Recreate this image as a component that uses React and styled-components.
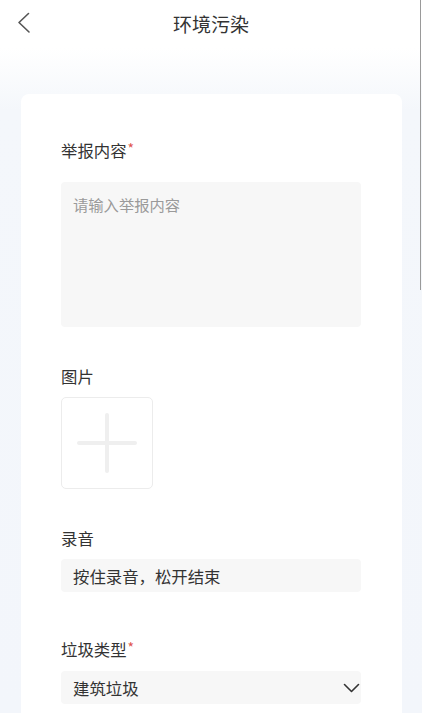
import React from "react";
import styled, { createGlobalStyle } from "styled-components";

const Global = createGlobalStyle`
  html, body { margin: 0; padding: 0; overflow: hidden; }
  body {
    font-family: "Noto Sans CJK SC", "Noto Sans", sans-serif;
    background: linear-gradient(#ffffff 0, #ffffff 48px, #f4f7fb 110px, #f3f6fb 100%);
    min-height: 713px;
  }
  * { box-sizing: border-box; }
`;

const Page = styled.div`
  width: 422px;
  height: 713px;
  overflow: hidden;
  display: flex;
  flex-direction: column;
`;

const Header = styled.header`
  height: 48px;
  flex: none;
  display: flex;
  align-items: center;
  justify-content: center;
  position: relative;
`;

const Back = styled.button`
  position: absolute;
  left: 14px;
  top: 9px;
  width: 20px;
  height: 28px;
  border: none;
  background: none;
  padding: 0;
  display: flex;
  align-items: center;
  justify-content: center;
`;

const Title = styled.h1`
  margin: 0;
  font-size: 19px;
  font-weight: 400;
  color: #333;
  line-height: 48px;
`;

const Body = styled.main`
  flex: 1;
  padding: 46px 20px 0 21px;
`;

const Card = styled.section`
  background: #fff;
  border-radius: 8px;
  min-height: 700px;
  padding: 45px 41px 0 40px;
  display: flex;
  flex-direction: column;
`;

const Field = styled.div`
  display: flex;
  flex-direction: column;
  margin-top: ${(p) => p.$top || 0}px;
`;

const Label = styled.div`
  font-size: 16.4px;
  line-height: 22px;
  color: #333;
  margin-bottom: ${(p) => p.$gap}px;
`;

const Star = styled.span`
  color: #e0554e;
  font-size: 14px;
  vertical-align: top;
  line-height: 19px;
  margin-left: 1px;
`;

const TextArea = styled.textarea`
  height: 145px;
  border: none;
  outline: none;
  resize: none;
  background: #f7f7f7;
  border-radius: 4px;
  padding: 11px 12px;
  font-family: inherit;
  font-size: 15.3px;
  line-height: 22px;
  color: #333;
  &::placeholder { color: #9a9a9a; }
`;

const Upload = styled.div`
  width: 92px;
  height: 92px;
  border: 1px solid #ececec;
  border-radius: 5px;
  display: flex;
  align-items: center;
  justify-content: center;
`;

const Bar = styled.div`
  height: 33px;
  background: #f7f7f7;
  border-radius: 4px;
  padding: 0 1px 0 12px;
  display: flex;
  align-items: center;
  justify-content: space-between;
  font-size: 16.4px;
  color: #333;
`;

const ScrollThumb = styled.div`
  position: fixed;
  right: 1px;
  top: 0;
  width: 1px;
  height: 290px;
  background: #9a9a9a;
`;

export default function App() {
  return (
    <>
      <Global />
      <Page>
        <Header>
          <Back aria-label="返回">
            <svg width="14" height="22" viewBox="0 0 14 22" fill="none">
              <polyline points="11.5,1.5 2,10.5 12,20" stroke="#555" strokeWidth="1.6" strokeLinecap="round" strokeLinejoin="round" />
            </svg>
          </Back>
          <Title>环境污染</Title>
        </Header>
        <Body>
          <Card>
            <Field>
              <Label $gap={21}>举报内容<Star>*</Star></Label>
              <TextArea placeholder="请输入举报内容" />
            </Field>
            <Field $top={38}>
              <Label $gap={10}>图片</Label>
              <Upload>
                <svg width="60" height="60" viewBox="0 0 60 60">
                  <rect x="28" y="0" width="4" height="60" rx="2" fill="#efefef" />
                  <rect x="0" y="28" width="60" height="4" rx="2" fill="#efefef" />
                </svg>
              </Upload>
            </Field>
            <Field $top={38}>
              <Label $gap={10}>录音</Label>
              <Bar>按住录音，松开结束</Bar>
            </Field>
            <Field $top={46}>
              <Label $gap={11}>垃圾类型<Star>*</Star></Label>
              <Bar>
                建筑垃圾
                <svg width="17" height="10" viewBox="0 0 17 10" fill="none">
                  <polyline points="1.5,1.5 8.5,8.5 15.5,1.5" stroke="#333" strokeWidth="1.6" strokeLinecap="round" strokeLinejoin="round" />
                </svg>
              </Bar>
            </Field>
          </Card>
        </Body>
        <ScrollThumb />
      </Page>
    </>
  );
}
